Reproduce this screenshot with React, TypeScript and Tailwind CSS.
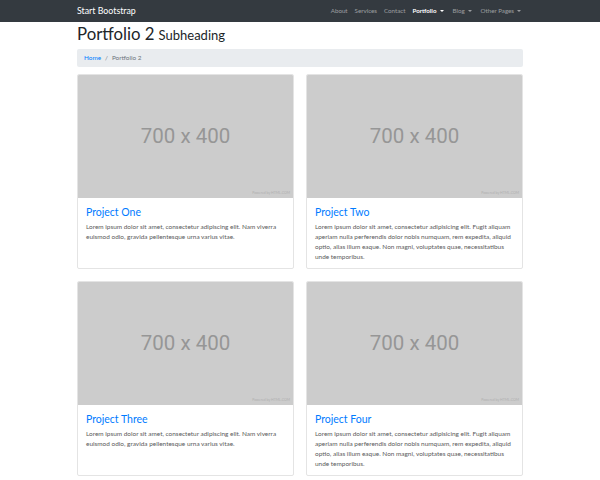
import React from "react";

const projects = [
  {
    title: "Project One",
    text: "Lorem ipsum dolor sit amet, consectetur adipiscing elit. Nam viverra euismod odio, gravida pellentesque urna varius vitae.",
  },
  {
    title: "Project Two",
    text: "Lorem ipsum dolor sit amet, consectetur adipisicing elit. Fugit aliquam aperiam nulla perferendis dolor nobis numquam, rem expedita, aliquid optio, alias illum eaque. Non magni, voluptates quae, necessitatibus unde temporibus.",
  },
  {
    title: "Project Three",
    text: "Lorem ipsum dolor sit amet, consectetur adipiscing elit. Nam viverra euismod odio, gravida pellentesque urna varius vitae.",
  },
  {
    title: "Project Four",
    text: "Lorem ipsum dolor sit amet, consectetur adipisicing elit. Fugit aliquam aperiam nulla perferendis dolor nobis numquam, rem expedita, aliquid optio, alias illum eaque. Non magni, voluptates quae, necessitatibus unde temporibus.",
  },
];

function Caret() {
  return (
    <span className="ml-[3px] inline-block h-0 w-0 border-l-[2.5px] border-r-[2.5px] border-t-[2.5px] border-l-transparent border-r-transparent border-t-current align-middle" />
  );
}

export default function App() {
  return (
    <div className="min-h-[480px] bg-white font-['Lato',sans-serif] text-[#212529]">
      <nav className="h-[22px] bg-[#343a40]">
        <div className="mx-auto flex h-full w-[446px] items-center justify-between">
          <span className="text-[8.8px] text-white">Start Bootstrap</span>
          <div className="flex items-center gap-[7px] pr-[2px] text-[6.2px] text-[#ffffff80]">
            <span>About</span>
            <span>Services</span>
            <span>Contact</span>
            <span className="flex items-center font-bold text-white">
              Portfolio
              <Caret />
            </span>
            <span className="ml-[2px] flex items-center">
              Blog
              <Caret />
            </span>
            <span className="ml-[2px] flex items-center">
              Other Pages
              <Caret />
            </span>
          </div>
        </div>
      </nav>

      <main className="mx-auto w-[446px]">
        <h1 className="flex items-baseline gap-[4px] leading-[24px]">
          <span className="text-[16.8px] font-normal">Portfolio 2</span>
          <span className="text-[13px]">Subheading</span>
        </h1>

        <div className="mt-[2px] flex h-[18px] items-center rounded-[2px] bg-[#e9ecef] px-[7px] text-[6.4px]">
          <span className="text-[#007bff]">Home</span>
          <span className="px-[4px] text-[#6c757d]">/</span>
          <span className="text-[#6c757d]">Portfolio 2</span>
        </div>

        <div className="mt-[7px] grid grid-cols-2 gap-x-[12px] gap-y-[12px]">
          {projects.map((p) => (
            <div
              key={p.title}
              className="flex flex-col overflow-hidden rounded-[2px] border border-[#e4e4e4] bg-white"
            >
              <div className="relative flex h-[123px] items-center justify-center bg-[#cccccc]">
                <span className="font-['Roboto',sans-serif] text-[20.5px] text-[#969696]">700 x 400</span>
                <span className="absolute bottom-[2px] right-[3px] text-[3.5px] text-[#b0b0b0]">
                  Powered by HTML.COM
                </span>
              </div>
              <div className="min-h-[70px] px-[8px] pb-[6px] pt-[7px]">
                <h4 className="text-[10.5px] leading-[14px] text-[#007bff]">{p.title}</h4>
                <p className="mt-[3px] text-[6.45px] leading-[10px] text-[#5a5a5a]">{p.text}</p>
              </div>
            </div>
          ))}
        </div>
      </main>
    </div>
  );
}
